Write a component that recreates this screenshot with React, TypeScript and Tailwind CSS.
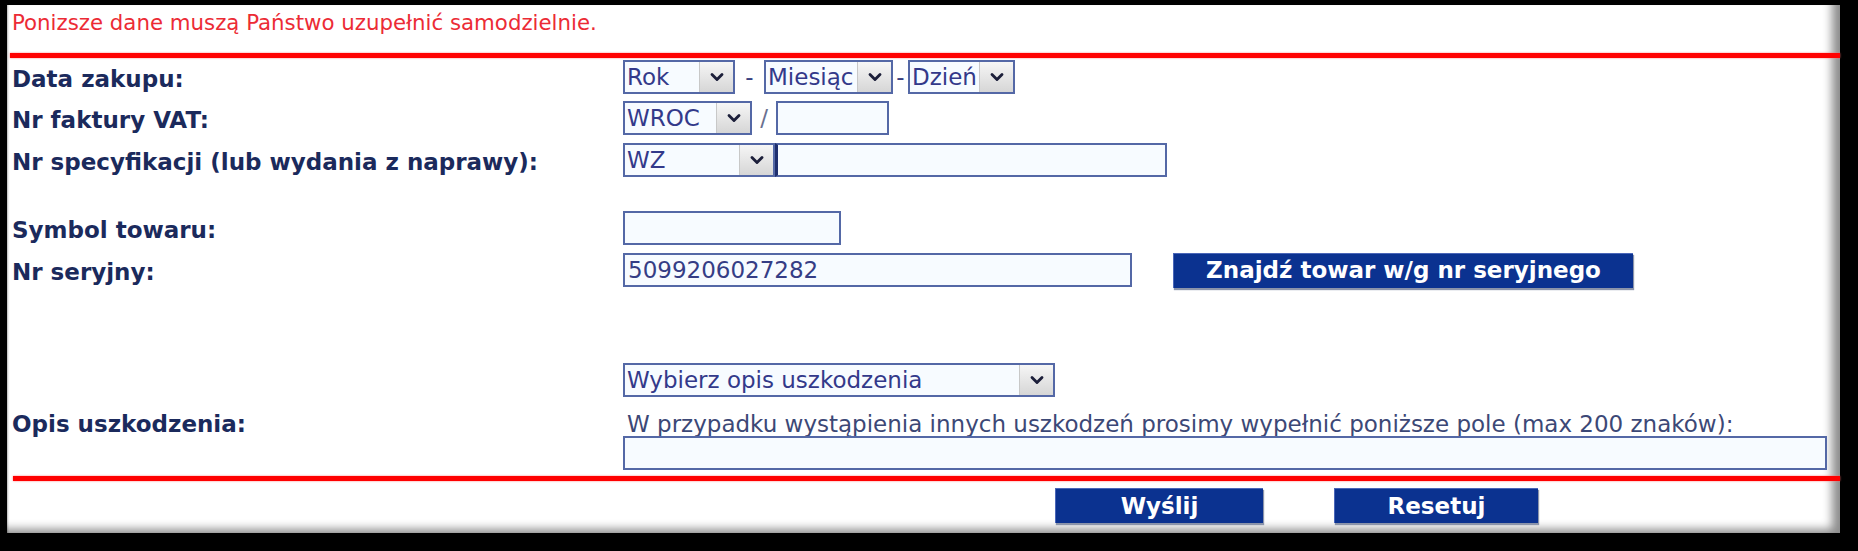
import { ChevronDown } from 'lucide-react';

const font = { fontFamily: '"DejaVu Sans", Verdana, sans-serif' };

function Select({ label, w }: { label: string; w: string }) {
  return (
    <div className={`${w} h-[34px] flex items-stretch border-2 border-[#5468a6] bg-[#f7fbff]`}>
      <span className="flex-1 flex items-center pl-[2px] text-[23px] leading-none text-[#33398a] whitespace-nowrap overflow-hidden">{label}</span>
      <span className="w-[34px] shrink-0 flex items-center justify-center bg-gradient-to-b from-[#f6f6f6] to-[#d6d6d6] border-l border-[#c8c8c8]">
        <ChevronDown size={20} strokeWidth={3.4} className="text-[#1c1f3a]" />
      </span>
    </div>
  );
}

function Input({ w, value, extra = '' }: { w: string; value?: string; extra?: string }) {
  return (
    <div className={`${w} h-[34px] flex items-center border-2 border-[#5468a6] bg-[#f7fbff] pl-[3px] text-[23px] leading-none text-[#353d85] ${extra}`}>
      {value}
    </div>
  );
}

function Row({ label, children, className = '' }: { label?: string; children: React.ReactNode; className?: string }) {
  return (
    <div className={`flex items-center h-[34px] shrink-0 ${className}`}>
      <div className="w-[611px] pt-[3px] text-[23px] leading-[28px] font-bold text-[#1b2a5c] whitespace-nowrap">{label}</div>
      <div className="flex items-center">{children}</div>
    </div>
  );
}

function Btn({ children, w }: { children: React.ReactNode; w: string }) {
  return (
    <button className={`${w} h-[35px] bg-[#0b3290] text-white font-bold text-[23px] leading-none shadow-[1px_2px_1px_#8b94aa] border-t border-l border-[#4a66b8]`}>
      {children}
    </button>
  );
}

export default function App() {
  return (
    <div className="w-[1858px] h-[551px] bg-black pt-[5px] pl-[7px] pr-[18px] pb-[18px]" style={font}>
      <div className="h-full bg-white pl-[5px] flex flex-col shadow-[inset_-16px_-12px_10px_-8px_rgba(0,0,0,0.45),inset_2px_0_2px_-1px_rgba(0,0,0,0.3)]">
        {/* HEADER NOTE */}
        <div className="pt-[6px] h-[30px] shrink-0 flex items-center text-[21.3px] text-[#ec2b35] leading-none whitespace-nowrap">
          Ponizsze dane muszą Państwo uzupełnić samodzielnie.
        </div>
        <div className="mt-[18px] -ml-[2px] h-[5px] shrink-0 bg-[#ff0000] shadow-[0_0_2px_#ff6a6a]" />

        {/* FORM */}
        <Row label="Data zakupu:" className="mt-[2px]">
          <Select label="Rok" w="w-[112px]" />
          <span className="w-[29px] text-center text-[23px] text-[#3a3f80]">-</span>
          <Select label="Miesiąc" w="w-[129px]" />
          <span className="w-[15px] text-center text-[23px] text-[#3a3f80]">-</span>
          <Select label="Dzień" w="w-[107px]" />
        </Row>
        <Row label="Nr faktury VAT:" className="mt-[7px]">
          <Select label="WROC" w="w-[129px]" />
          <span className="w-[24px] text-center text-[23px] text-[#6a7090]">/</span>
          <Input w="w-[113px]" />
        </Row>
        <Row label="Nr specyfikacji (lub wydania z naprawy):" className="mt-[8px]">
          <Select label="WZ" w="w-[152px]" />
          <Input w="w-[392px]" extra="border-l-[3px] border-l-[#1f2f6e]" />
        </Row>
        <Row label="Symbol towaru:" className="mt-[34px]">
          <Input w="w-[218px]" />
        </Row>
        <Row label="Nr seryjny:" className="mt-[8px]">
          <Input w="w-[509px]" value="5099206027282" />
          <div className="ml-[41px]">
            <Btn w="w-[460px]">Znajdź towar w/g nr seryjnego</Btn>
          </div>
        </Row>
        <Row className="mt-[76px]">
          <Select label="Wybierz opis uszkodzenia" w="w-[432px]" />
        </Row>
        <div className="mt-[15px] h-[24px] shrink-0 flex items-center">
          <div className="w-[611px] text-[23px] leading-[24px] font-bold text-[#1b2a5c] whitespace-nowrap">Opis uszkodzenia:</div>
          <span className="pl-[4px] text-[23px] leading-[24px] text-[#3c4876] whitespace-nowrap">
            W przypadku wystąpienia innych uszkodzeń prosimy wypełnić poniższe pole (max 200 znaków):
          </span>
        </div>
        <Row>
          <Input w="w-[1204px]" />
        </Row>
        <div className="mt-[6px] ml-[1px] h-[5px] shrink-0 bg-[#ff0000] shadow-[0_0_2px_#ff6a6a]" />

        {/* ACTIONS */}
        <div className="mt-[7px] flex pl-[1043px] gap-[71px]">
          <Btn w="w-[208px]">Wyślij</Btn>
          <Btn w="w-[204px]">Resetuj</Btn>
        </div>
      </div>
    </div>
  );
}
